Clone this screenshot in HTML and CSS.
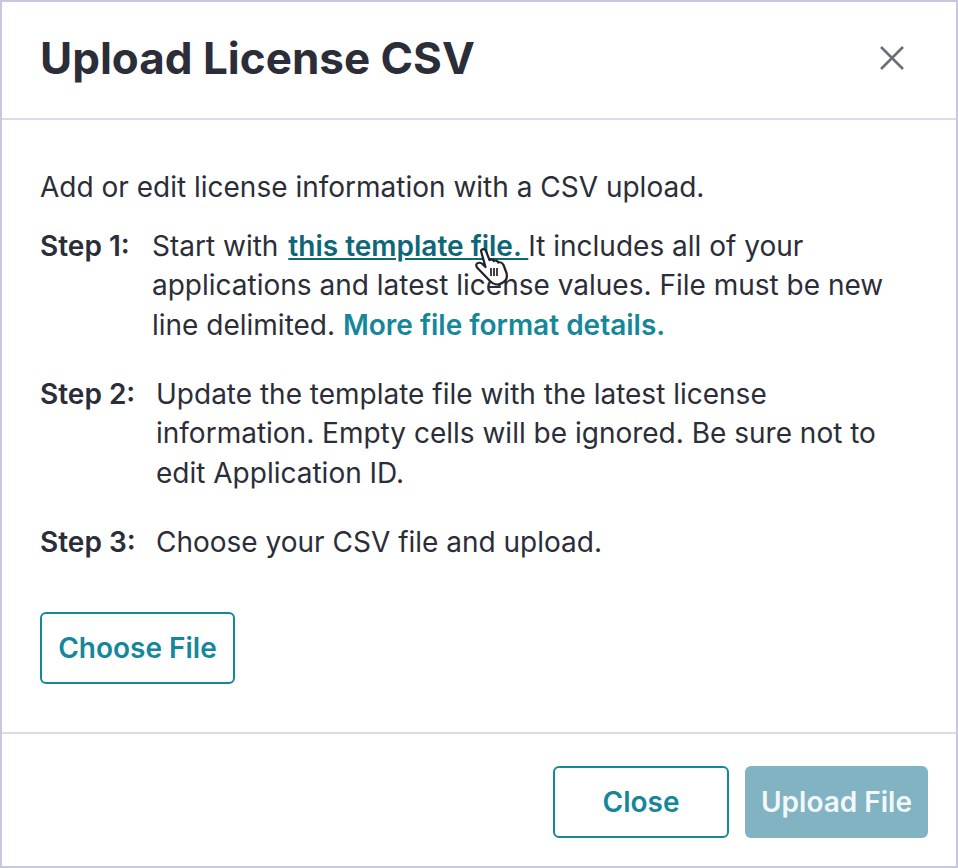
FILE: index.html
```html
<!DOCTYPE html>
<html lang="en">
<head>
    <meta charset="UTF-8">
    <meta name="viewport" content="width=device-width, initial-scale=1.0">
    <title>Upload License CSV</title>
    <link rel="stylesheet" href="styles.css">
</head>
<body>
    <div class="modal">
        <header class="modal-header">
            <h1>Upload License CSV</h1>
            <button class="close-icon" aria-label="Close">
                <svg width="24" height="24" viewBox="0 0 24 24" fill="none" stroke="#6b6f7a" stroke-width="2.6">
                    <path d="M1 1 L23 23 M23 1 L1 23"/>
                </svg>
            </button>
        </header>

        <div class="modal-body">
            <p class="intro">Add or edit license information with a CSV upload.</p>

            <div class="step step-one">
                <strong>Step 1:</strong>
                <p>Start with <a href="#" class="template-link">this template file. </a>It includes all of your applications and latest license values. File must be new line delimited. <a href="#" class="details-link">More file format details.</a></p>
                <!-- mouse pointer over the link -->
                <svg class="cursor" width="38" height="42" viewBox="0 0 38 42">
                    <path d="M7 5C7.500 2.500 11 2.500 12 5L15.500 14C17 13 19 13.500 19.800 15C21 14 23.500 14.500 24.300 16.500C26 15.800 28.500 16.800 29.500 19L32.500 27C33.500 31 32 35 28 37C24 39.500 19.500 38.500 16.500 35.500L3.500 22C1.500 20 2 17.500 4 17C5.500 16.500 7.500 17 9 18.500L11.500 21Z" fill="#fff" stroke="#1f2229" stroke-width="2.2" stroke-linejoin="round"/>
                    <path d="M17 22v8M20 22v8M23 22v8" stroke="#1f2229" stroke-width="1.700" fill="none"/>
                </svg>
            </div>

            <div class="step step-two">
                <strong>Step 2:</strong>
                <p>Update the template file with the latest license information. Empty cells will be ignored. Be sure not to edit Application ID.</p>
            </div>

            <div class="step step-three">
                <strong>Step 3:</strong>
                <p>Choose your CSV file and upload.</p>
            </div>

            <button class="btn btn-outline btn-choose">Choose File</button>
        </div>

        <footer class="modal-footer">
            <button class="btn btn-outline btn-close">Close</button>
            <button class="btn btn-disabled">Upload File</button>
        </footer>
    </div>
</body>
</html>
```

FILE: styles.css
```css
* {
    margin: 0;
    padding: 0;
    box-sizing: border-box;
}

body {
    font-family: 'Inter', sans-serif;
    color: #2b2e38;
    background-color: #fff;
}

.modal {
    width: 958px;
    height: 868px;
    border: 2px solid #c9c6df;
    background-color: #fff;
    display: flex;
    flex-direction: column;
}

.modal-header {
    height: 118px;
    flex-shrink: 0;
    padding: 0 52px 4px 38px;
    display: flex;
    align-items: center;
    justify-content: space-between;
    border-bottom: 2px solid #dcdbe9;
}

h1 {
    font-size: 44px;
    font-weight: 700;
    color: #2b2e38;
}

.close-icon {
    border: none;
    background: none;
    display: flex;
}

.modal-body {
    flex: 1;
    padding: 48px 38px 0;
    font-size: 28px;
    line-height: 39.5px;
}

.intro {
    margin-bottom: 19px;
}

.step {
    display: flex;
    position: relative;
    margin-bottom: 29.5px;
}

.step strong {
    flex-shrink: 0;
    font-weight: 600;
}

.step-one strong {
    width: 112px;
}

.step-two strong,
.step-three strong {
    width: 116px;
}

.template-link {
    margin-left: 2px;
    color: #0e6679;
    font-weight: 600;
}

.details-link {
    color: #15879b;
    font-weight: 600;
    text-decoration: none;
}

.cursor {
    position: absolute;
    left: 434px;
    top: 19px;
}

.btn {
    font-family: 'Inter', sans-serif;
    font-size: 28px;
    font-weight: 600;
    border-radius: 6px;
    height: 72px;
}

.btn-outline {
    background-color: #fff;
    border: 2px solid #15879b;
    color: #15879b;
}

.btn-choose {
    width: 195px;
    margin-top: 20px;
}

.modal-footer {
    height: 134px;
    flex-shrink: 0;
    border-top: 2px solid #dcdbe9;
    padding: 32px 28px 0 0;
    display: flex;
    justify-content: flex-end;
    gap: 16px;
}

.btn-close {
    width: 176px;
}

.btn-disabled {
    width: 183px;
    border: none;
    background-color: #81b3c2;
    color: #f2f8fa;
}
```
